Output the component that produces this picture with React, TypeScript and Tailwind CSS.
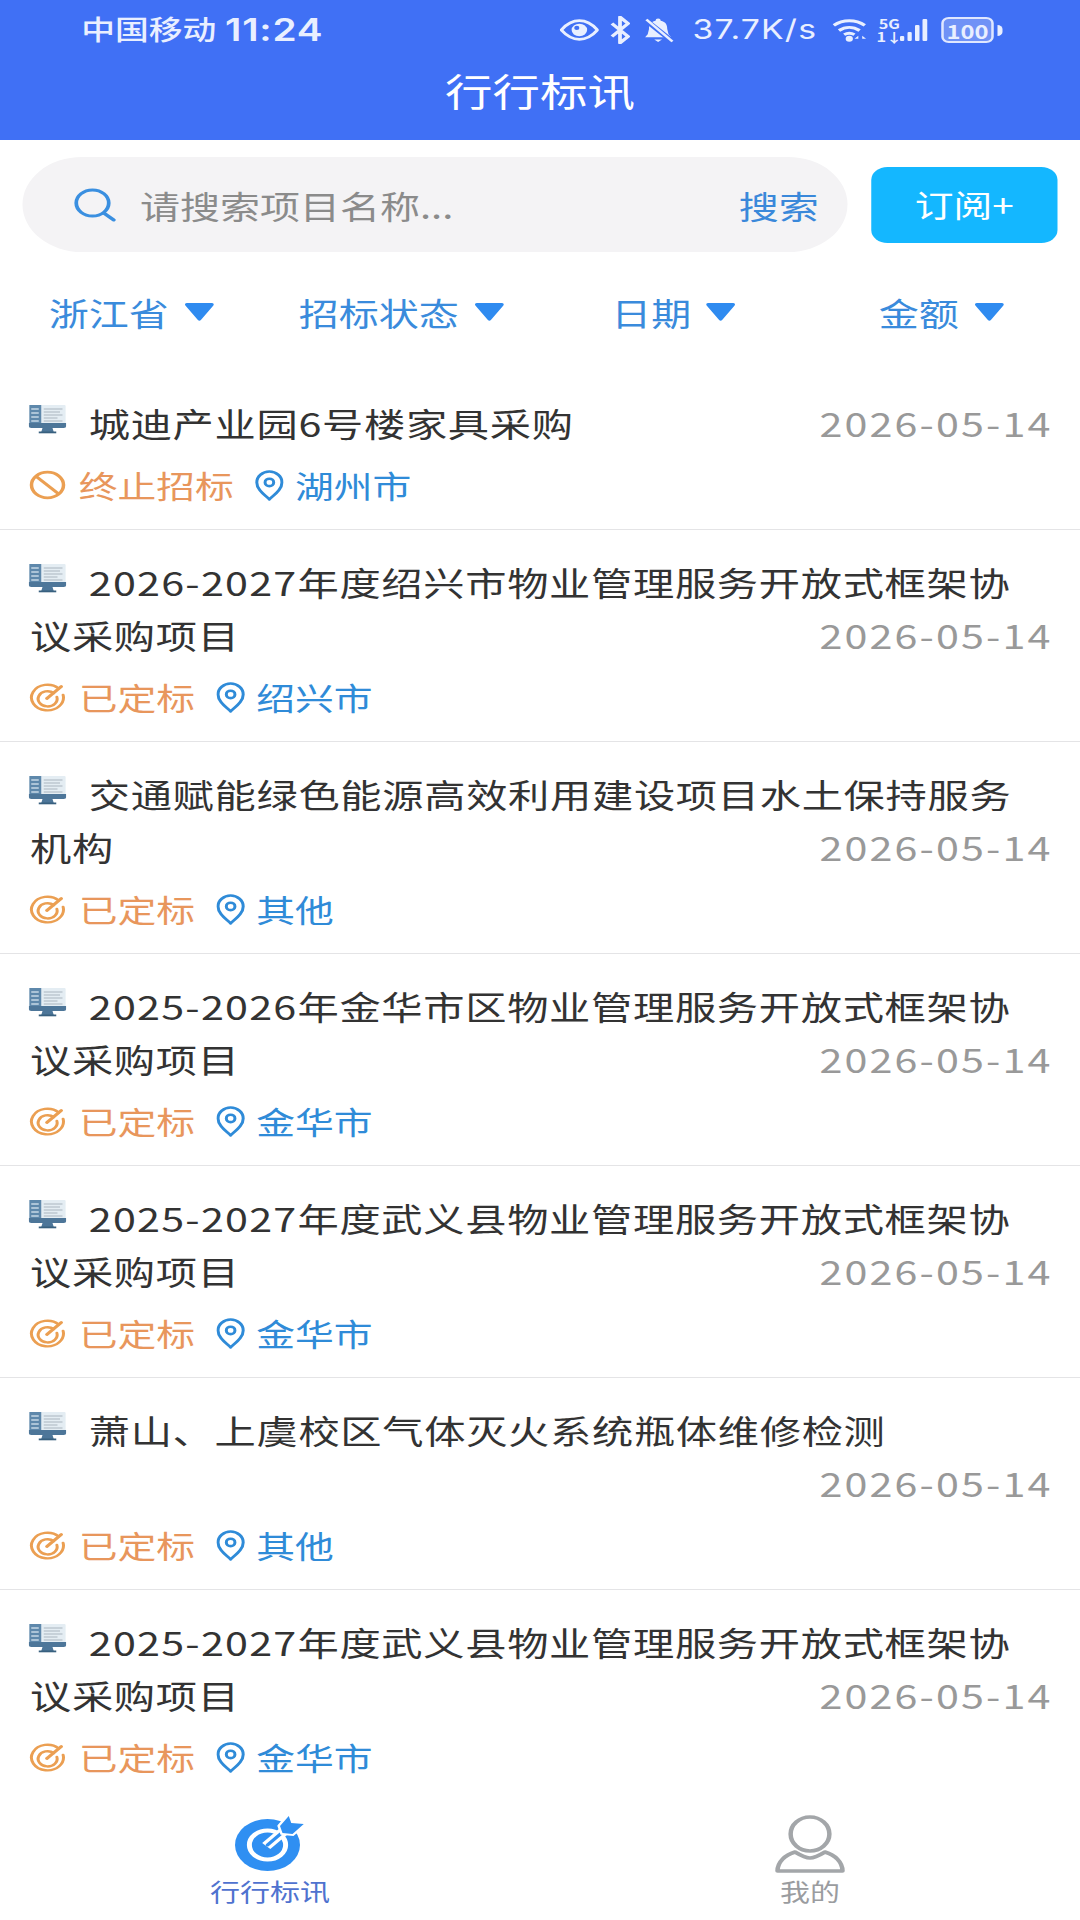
import React from "react";

const font = { fontFamily: '"Noto Sans CJK SC","Noto Sans",sans-serif' };

function Monitor() {
  return (
    <svg viewBox="0 0 30 30" className="inline-block w-[30px] h-[30px] mr-[18px] align-[-1px] relative -top-[4px]">
      <rect x="0.5" y="1" width="29" height="21" rx="1" fill="#e4edf3" />
      <rect x="0.5" y="1" width="9.5" height="18" fill="#5e88ab" />
      <path d="M2 5h6M2 9h6M2 13h6M2 17h6" stroke="#c6d8e6" strokeWidth="1.3" />
      <path d="M12 5h15M12 8h13M12 11h15M12 14h11M12 17h15" stroke="#aab6c0" strokeWidth="0.9" />
      <path d="M0 19h30v3a2 2 0 0 1-2 2H2a2 2 0 0 1-2-2z" fill="#4d7699" />
      <path d="M11 24h8l1 4H10z" fill="#4d7699" />
      <rect x="8" y="27.5" width="14" height="1.8" fill="#38607f" />
    </svg>
  );
}

function BanIcon() {
  return (
    <svg viewBox="0 0 30 30" className="w-[30px] h-[30px]" fill="none" stroke="#eb9f52" strokeWidth="2.8">
      <circle cx="15" cy="15" r="12.8" />
      <path d="M6 6.5l18 17.5" />
    </svg>
  );
}

function TargetIcon() {
  return (
    <svg viewBox="0 0 30 30" className="w-[30px] h-[30px]" fill="none" stroke="#eb9f52" strokeWidth="2.4" strokeLinecap="round">
      <path d="M24 6.5A12.8 12.8 0 1 0 27.5 13" />
      <path d="M20 11A7.6 7.6 0 1 0 22.5 15" />
      <path d="M14.5 16.5L26 4.5" strokeWidth="2.8" />
    </svg>
  );
}

function Pin() {
  return (
    <svg viewBox="0 0 24 30" preserveAspectRatio="none" className="w-[23px] h-[31px]" fill="none" stroke="#2f8bd8" strokeWidth="2.5">
      <path d="M12 28.5C7 23 1.5 18.5 1.5 12a10.5 10.5 0 0 1 21 0c0 6.5-5.5 11-10.5 16.5z" strokeLinejoin="round" />
      <circle cx="12" cy="12" r="3.6" />
    </svg>
  );
}

function Tri() {
  return (
    <svg viewBox="0 0 24 20" className="w-[25px] h-[20px]">
      <path d="M2 1h20a1.5 1.5 0 0 1 1.2 2.4L13.2 18a1.5 1.5 0 0 1-2.4 0L.8 3.4A1.5 1.5 0 0 1 2 1z" fill="#2f8bf0" />
    </svg>
  );
}

const rows = [
  { y: "", t: "城迪产业园6号楼家具采购", s: "终止招标", c: "湖州市", ban: true },
  { y: "2026-2027", t: "年度绍兴市物业管理服务开放式框架协议采购项目", s: "已定标", c: "绍兴市" },
  { y: "", t: "交通赋能绿色能源高效利用建设项目水土保持服务机构", s: "已定标", c: "其他" },
  { y: "2025-2026", t: "年金华市区物业管理服务开放式框架协议采购项目", s: "已定标", c: "金华市" },
  { y: "2025-2027", t: "年度武义县物业管理服务开放式框架协议采购项目", s: "已定标", c: "金华市" },
  { y: "", t: "萧山、上虞校区气体灭火系统瓶体维修检测", s: "已定标", c: "其他" },
  { y: "2025-2027", t: "年度武义县物业管理服务开放式框架协议采购项目", s: "已定标", c: "金华市", last: true },
];

function Row({ r }: { r: (typeof rows)[number] }) {
  return (
    <div className={"pt-[26px] pb-[19px] pl-[24px] pr-[39px] " + (r.last ? "" : "border-b border-[#e4e4e6]")}>
      <div className="flow-root text-[33px] leading-[53px] text-[#333333] tracking-[0.55px]">
        <span className="-ml-[1px]">
          <Monitor />
          {r.y ? <span className="tracking-[1px]">{r.y}</span> : null}
          {r.t}
        </span>
        <span className="float-right -mr-[17px] text-[#999999] tracking-[1.7px]">2026-05-14</span>
      </div>
      <div className="mt-[10px] h-[50px] flex items-center -ml-[1px] text-[31px]">
        {r.ban ? <BanIcon /> : <TargetIcon />}
        <span className="ml-[10px] text-[#e8965c]">{r.s}</span>
        <span className="ml-[17px] flex"><Pin /></span>
        <span className="ml-[9px] text-[#2f8bd8]">{r.c}</span>
      </div>
    </div>
  );
}

function StatusBar() {
  return (
    <div className="h-[60px] flex items-center text-[#e9efff] relative">
      <span className="ml-[65px] text-[27px] font-medium -mt-[1px]">中国移动</span>
      <span className="ml-[7px] text-[31px] font-semibold tracking-[0.6px]" style={{ fontFamily: "Inter, sans-serif" }}>11:24</span>
      <div className="ml-auto mr-[62px] flex items-center">
        <svg viewBox="0 0 30 20" className="w-[31px] h-[22px]">
          <path d="M1 10C6 3 11 1 15 1s9 2 14 9c-5 7-10 9-14 9S6 17 1 10z" fill="none" stroke="#e9efff" strokeWidth="2.6" />
          <circle cx="15" cy="10" r="6" fill="#e9efff" />
          <circle cx="13" cy="8" r="2" fill="#4070f5" />
        </svg>
        <svg viewBox="0 0 16 26" className="ml-[8px] w-[18px] h-[28px]" fill="none" stroke="#e9efff" strokeWidth="2.8">
          <path d="M2 7l12 12-6 6V1l6 6L2 19" strokeLinejoin="round" />
        </svg>
        <svg viewBox="0 0 24 24" className="ml-[9px] w-[25px] h-[26px]">
          <path d="M12 1a2 2 0 0 1 2 2c4 1 5 4 5 8l1 5 2 3H2l2-3 1-5c0-4 1-7 5-8a2 2 0 0 1 2-2z" fill="#e9efff" />
          <path d="M9 21h6l-3 2.5z" fill="#e9efff" />
          <path d="M2 2l20 20" stroke="#4070f5" strokeWidth="4.5" />
          <path d="M3 2l20 21" stroke="#e9efff" strokeWidth="2.2" />
        </svg>
        <span className="ml-[15px] text-[27px] tracking-[0.9px] w-[106px]" style={{ fontFamily: "Inter, sans-serif" }}>37.7K/s</span>
        <svg viewBox="0 0 30 24" className="ml-[6px] w-[31px] h-[25px]" fill="none" stroke="#e9efff" strokeWidth="2.8">
          <path d="M1 7C8 1 18 1 25 7" />
          <path d="M5 12c5-4 11-4 16 0" />
          <path d="M9 16c3-2 5-2 8 0" />
          <circle cx="13" cy="20" r="2.8" fill="#e9efff" stroke="none" />
          <path d="M20 17l-3 3h3zM23 17l3 3h-3z" fill="#e9efff" stroke="none" />
        </svg>
        <div className="ml-[7px] w-[15px] flex flex-col items-center text-[13px] leading-[13px] font-bold">
          <span>5G</span>
          <span>1↓</span>
        </div>
        <svg viewBox="0 0 24 24" className="ml-[1px] w-[24px] h-[26px]" fill="#e9efff">
          <rect x="0" y="18" width="3.4" height="5" rx="1" />
          <rect x="6" y="14" width="3.4" height="9" rx="1" />
          <rect x="12" y="7" width="3.6" height="16" rx="1" />
          <rect x="18" y="1" width="3.8" height="22" rx="1" />
        </svg>
        <div className="ml-[9px] w-[42px] h-[26px] rounded-[6px] border-[2.5px] border-[#dfe7ff] bg-[#7092f6] flex items-center justify-center text-[19px] leading-none font-semibold">100</div>
        <div className="ml-[3px] w-[4px] h-[11px] rounded-r-sm bg-[#e9efff]" />
      </div>
    </div>
  );
}

export default function App() {
  return (
    <div className="w-[864px] h-[1920px] origin-top-left scale-x-[1.25] bg-white flex flex-col overflow-hidden" style={font}>
      <div className="h-[140px] bg-[#4070f5]">
        <StatusBar />
        <div className="h-[60px] flex items-center justify-center text-white text-[38px] -mt-[1px]">行行标讯</div>
      </div>

      <div className="pt-[17px] pl-[18px] flex items-center">
        <div className="w-[660px] h-[95px] rounded-full bg-[#f4f3f5] flex items-center">
          <svg viewBox="0 0 34 34" className="ml-[41px] w-[34px] h-[34px]" fill="none" stroke="#3a8fe0" strokeWidth="3">
            <circle cx="15" cy="15" r="13" />
            <path d="M24 25l8 7" strokeLinecap="round" />
          </svg>
          <span className="ml-[19px] text-[32px] text-[#8b8b8b]">请搜索项目名称...</span>
          <span className="ml-auto mr-[23px] text-[32px] text-[#3a88da]">搜索</span>
        </div>
        <div className="ml-[19px] w-[149px] h-[76px] rounded-[13px] bg-[#14b7ff] flex items-center justify-center text-white text-[31px]">订阅+</div>
      </div>

      <div className="mt-[35px] mb-[34px] h-[50px] flex items-center pl-[39px] text-[32px] text-[#3a8bdc]">
        <div className="w-[200px] flex items-center"><span>浙江省</span><span className="ml-[12px] flex"><Tri /></span></div>
        <div className="w-[250px] flex items-center"><span>招标状态</span><span className="ml-[12px] flex"><Tri /></span></div>
        <div className="w-[214px] flex items-center"><span>日期</span><span className="ml-[11px] flex"><Tri /></span></div>
        <div className="flex items-center"><span>金额</span><span className="ml-[12px] flex"><Tri /></span></div>
      </div>

      <div className="flex-1 overflow-hidden">
        {rows.map((r, i) => <Row key={i} r={r} />)}
      </div>

      <div className="h-[130px] bg-white grid grid-cols-2 pt-[25px]">
        <div className="flex flex-col items-center">
          <svg viewBox="0 0 56 56" className="w-[56px] h-[56px]">
            <circle cx="26" cy="30" r="26" fill="#2f8ff2" />
            <circle cx="26" cy="30" r="14.5" fill="none" stroke="#fff" strokeWidth="4" />
            <path d="M25 31L44 11" stroke="#fff" strokeWidth="9" />
            <path d="M26 30L42 13" stroke="#2f8ff2" strokeWidth="3" strokeLinecap="round" />
            <path d="M36 11l7-10 2 7 10 1-9 10-8-1z" fill="#fff" stroke="#fff" strokeWidth="4" />
            <path d="M36 11l7-10 2 7 10 1-9 10-8-1z" fill="#2f8ff2" />
          </svg>
          <span className="mt-[2px] text-[24px] leading-[36px] text-[#4f72cf]">行行标讯</span>
        </div>
        <div className="flex flex-col items-center">
          <svg viewBox="0 0 56 58" className="w-[56px] h-[58px]" fill="none" stroke="#a3a6a9" strokeWidth="3.6">
            <ellipse cx="28" cy="19" rx="15.5" ry="17" />
            <path d="M16 37C8 40 2 47 2 56h52c0-9-6-16-14-19-4 3-8 6-12 6s-8-3-12-6z" strokeLinejoin="round" />
          </svg>
          <span className="text-[24px] leading-[36px] text-[#9a9c9f]">我的</span>
        </div>
      </div>
    </div>
  );
}
